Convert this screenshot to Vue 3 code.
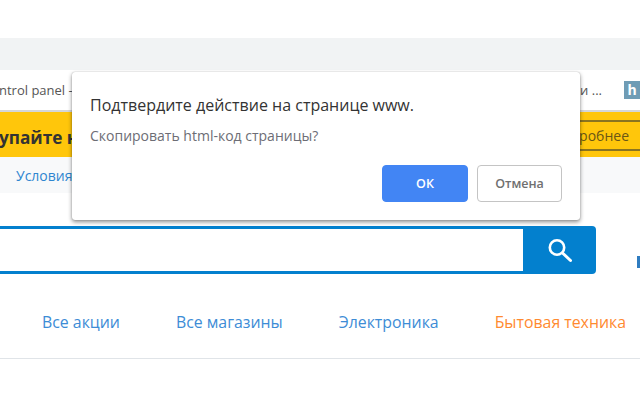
<script setup>
const nav = [
  { label: 'Все акции', cls: '' },
  { label: 'Все магазины', cls: '' },
  { label: 'Электроника', cls: '' },
  { label: 'Бытовая техника', cls: 'hot' }
]
</script>

<template>
  <div class="page">
    <div class="top"></div>
    <div class="tabs"></div>
    <div class="bookmarks">
      <span class="bm-left">ntrol panel -</span>
      <span class="bm-right">и ...</span>
      <span class="h-icon">h</span>
    </div>
    <div class="promo">
      <span class="promo-text">упайте на</span>
      <span class="promo-btn">Подробнее</span>
    </div>
    <div class="subbar"><span class="sub-link">Условия</span></div>
    <div class="search">
      <div class="search-input"></div>
      <div class="search-btn">
        <svg width="26" height="26" viewBox="0 0 26 26" fill="none" stroke="#fff">
          <circle cx="10" cy="10.5" r="7.2" stroke-width="2.6" />
          <path d="M15.5 16 L23.5 23.5" stroke-width="3" stroke-linecap="round" />
        </svg>
      </div>
      <span class="side-mark"></span>
    </div>
    <nav class="nav">
      <a v-for="n in nav" :key="n.label" class="nav-item" :class="n.cls">{{ n.label }}</a>
    </nav>

    <div class="dialog">
      <div class="d-title">Подтвердите действие на странице www.</div>
      <div class="d-text">Скопировать html-код страницы?</div>
      <div class="d-actions">
        <button class="btn ok">ОК</button>
        <button class="btn cancel">Отмена</button>
      </div>
    </div>
  </div>
</template>

<style>
html, body { margin: 0; background: #fff; }
</style>

<style scoped>
.page {
  position: relative;
  width: 640px;
  height: 400px;
  overflow: hidden;
  background: #fff;
  font-family: "Open Sans", "Noto Sans", sans-serif;
}
.top { height: 38px; }
.tabs { height: 32px; background: #f1f3f4; }
.bookmarks {
  height: 40px;
  display: flex;
  align-items: center;
  border-bottom: 2px solid #d4d6d8;
  font-size: 13px;
  color: #555;
}
.bm-left { margin-left: -1px; }
.bm-right { margin-left: auto; margin-right: 22px; }
.h-icon {
  width: 16px;
  height: 18px;
  background: #6f9cb5;
  color: #fff;
  font-weight: 700;
  font-size: 14px;
  line-height: 18px;
  text-align: center;
}
.promo {
  height: 45px;
  background: #ffc60b;
  display: flex;
  align-items: center;
  justify-content: space-between;
  box-sizing: border-box;
  overflow: hidden;
  color: #333;
}
.promo-text {
  font-weight: 700;
  font-size: 17.2px;
  margin: 5px 0 0 -1px;
  white-space: nowrap;
}
.promo-btn {
  font-size: 14px;
  line-height: 26px;
  padding: 1px 31px 0 0;
  color: #6a5616;
  border-top: 2px solid #8a7420;
  border-bottom: 2px solid #8a7420;
  margin: 2px -20px 0 0;
}
.subbar {
  height: 36px;
  background: #f8f9fa;
  display: flex;
  align-items: center;
  padding-left: 16px;
  font-size: 14px;
}
.sub-link { color: #2f86d0; }
.search {
  display: flex;
  margin-top: 33px;
  height: 48px;
  width: 596px;
  position: relative;
}
.search-input {
  flex: 1;
  border-top: 3px solid #0380ce;
  border-bottom: 3px solid #0380ce;
}
.search-btn {
  width: 73px;
  background: #0380ce;
  border-radius: 0 4px 4px 0;
  display: flex;
  align-items: center;
  justify-content: center;
}
.side-mark {
  position: absolute;
  left: 637px;
  top: 30px;
  width: 3px;
  height: 12px;
  background: #2f7cc0;
}
.nav {
  display: flex;
  gap: 56px;
  padding: 36px 0 24px 42px;
  white-space: nowrap;
  border-bottom: 1px solid #e0e4e8;
  font-size: 15.85px;
  line-height: 24px;
}
.nav-item { color: #3d8cd6; }
.nav-item.hot { color: #ff8a30; }
.dialog {
  position: absolute;
  left: 72px;
  top: 72px;
  width: 508px;
  height: 148px;
  box-sizing: border-box;
  padding: 22px 18px 0;
  background: #fff;
  border-radius: 3px;
  box-shadow: 0 0 1px rgba(0,0,0,.35), 0 2px 4px rgba(0,0,0,.45);
}
.d-title { font-size: 16px; line-height: 22px; color: #333; }
.d-text { margin-top: 11px; font-size: 14px; line-height: 18px; color: #6d6d75; }
.d-actions {
  position: absolute;
  right: 18px;
  bottom: 18px;
  display: flex;
  gap: 9px;
}
.btn {
  height: 37px;
  border-radius: 4px;
  font: 600 12.5px "Open Sans", sans-serif;
  padding: 0;
}
.ok { width: 86px; background: #4285f4; border: 1px solid #4285f4; color: #fff; }
.cancel { width: 85px; background: #fff; border: 1px solid #c4c4c4; color: #707070; }
</style>
